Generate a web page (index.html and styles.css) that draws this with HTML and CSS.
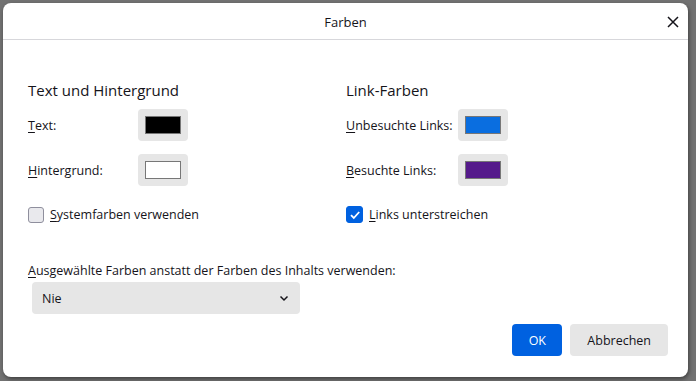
FILE: index.html
```html
<!DOCTYPE html>
<html lang="de">
<head>
    <meta charset="UTF-8">
    <meta name="viewport" content="width=device-width, initial-scale=1.0">
    <title>Farben</title>
    <link rel="stylesheet" href="styles.css">
</head>
<body>
    <div class="dialog">
        <div class="dialog-header">
            <span class="dialog-title">Farben</span>
            <button class="close" aria-label="Schließen">
                <svg width="12" height="12" viewBox="0 0 12 12"><path d="M1 1L11 11M11 1L1 11" stroke="#15141a" stroke-width="1.5" fill="none"/></svg>
            </button>
        </div>

        <div class="dialog-body">
            <div class="columns">
                <div class="column">
                    <h2>Text und Hintergrund</h2>
                    <div class="color-grid left">
                        <label><u>T</u>ext:</label>
                        <button class="swatch"><span style="background:#000000"></span></button>
                        <label><u>H</u>intergrund:</label>
                        <button class="swatch"><span style="background:#ffffff"></span></button>
                    </div>
                    <label class="check"><span class="box"></span><span><u>S</u>ystemfarben verwenden</span></label>
                </div>
                <div class="column">
                    <h2>Link-Farben</h2>
                    <div class="color-grid right">
                        <label><u>U</u>nbesuchte Links:</label>
                        <button class="swatch"><span style="background:#0a6ee0"></span></button>
                        <label><u>B</u>esuchte Links:</label>
                        <button class="swatch"><span style="background:#551a8b"></span></button>
                    </div>
                    <label class="check"><span class="box checked"><svg width="12" height="12" viewBox="0 0 12 12"><path d="M2 6.2L4.8 9L10.2 3" stroke="#fff" stroke-width="1.8" fill="none"/></svg></span><span><u>L</u>inks unterstreichen</span></label>
                </div>
            </div>

            <div class="override">
                <label><u>A</u>usgewählte Farben anstatt der Farben des Inhalts verwenden:</label>
                <div class="select">
                    <span>Nie</span>
                    <svg width="12" height="12" viewBox="0 0 12 12"><path d="M2.5 4.5L6 8L9.5 4.5" stroke="#15141a" stroke-width="1.5" fill="none"/></svg>
                </div>
            </div>

            <div class="actions">
                <button class="btn primary">OK</button>
                <button class="btn">Abbrechen</button>
            </div>
        </div>
    </div>
</body>
</html>
```

FILE: styles.css
```css
body { margin: 0; background: #727272; font-family: "Open Sans", "Noto Sans", sans-serif; font-size: 12.5px; color: #15141a; height: 381px; overflow: hidden; }
u { text-decoration-thickness: 1px; text-underline-offset: 2px; }
button { font: inherit; color: inherit; border: none; cursor: pointer; }

.dialog { margin: 3px 0 0 3px; width: 685px; height: 374px; background: #fff; border-radius: 8px; box-shadow: 1px 2px 4px rgba(0,0,0,.45); display: flex; flex-direction: column; }
.dialog-header { height: 36px; border-bottom: 1px solid #d7d7db; display: flex; align-items: center; justify-content: center; position: relative; }
.dialog-title { font-size: 13px; font-weight: 500; padding-top: 2px; }
.close { position: absolute; right: 3px; top: 7px; width: 24px; height: 24px; background: none; display: flex; align-items: center; justify-content: center; }

.dialog-body { flex: 1; padding: 0 20px 21px 25px; display: flex; flex-direction: column; }
.columns { display: flex; margin-top: 40px; }
.column { width: 318px; }
h2 { font-size: 15px; font-weight: 500; margin: 0; line-height: 20px; }
.color-grid { display: grid; align-items: center; row-gap: 13px; margin-top: 9px; }
.color-grid.left { grid-template-columns: 110px 50px; }
.color-grid.right { grid-template-columns: 112px 50px; }
.swatch { width: 50px; height: 32px; background: #e6e6e6; border-radius: 4px; display: flex; align-items: center; justify-content: center; padding: 0; }
.swatch span { width: 34px; height: 16px; border: 1px solid #777; }

.check { display: flex; align-items: center; gap: 6px; margin-top: 20px; }
.box { width: 14px; height: 14px; border: 1px solid #8f8f9d; border-radius: 3px; background: #e9e9ed; display: flex; align-items: center; justify-content: center; }
.box.checked { width: 15px; height: 15px; background: #0061e0; border-color: #0061e0; }

.override { margin-top: 39px; }
.override label { display: block; line-height: 18px; }
.select { width: 248px; height: 32px; margin: 2px 0 0 4px; padding: 0 10px; background: #e6e6e6; border-radius: 4px; display: flex; align-items: center; justify-content: space-between; }

.actions { margin-top: auto; display: flex; justify-content: flex-end; gap: 8px; }
.btn { height: 32px; padding: 0 17px; border-radius: 4px; background: #e6e6e6; }
.btn.primary { width: 50px; padding: 0; background: #0061e0; color: #fff; }
```
